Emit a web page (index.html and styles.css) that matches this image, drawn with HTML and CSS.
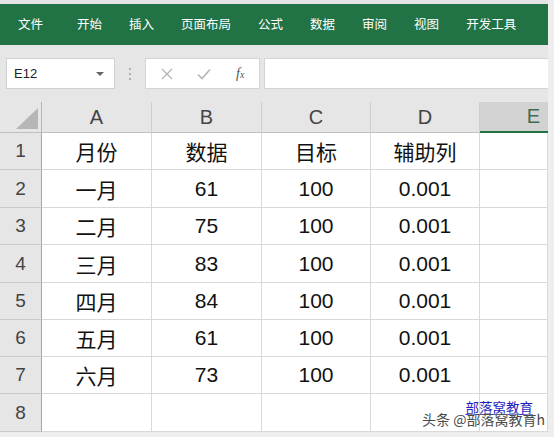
FILE: index.html
```html
<!DOCTYPE html>
<html lang="zh">
<head>
<meta charset="utf-8">
<link rel="stylesheet" href="styles.css">
</head>
<body>
<div class="app">
  <div class="ribbon">
    <span class="tab first">文件</span>
    <span class="tab">开始</span>
    <span class="tab">插入</span>
    <span class="tab">页面布局</span>
    <span class="tab">公式</span>
    <span class="tab">数据</span>
    <span class="tab">审阅</span>
    <span class="tab">视图</span>
    <span class="tab">开发工具</span>
  </div>
  <div class="fbar">
    <div class="namebox"><span class="ref">E12</span><span class="caret"></span></div>
    <div class="dots"><i></i><i></i><i></i></div>
    <div class="fbtns">
      <svg class="ico" width="12" height="12" viewBox="0 0 12 12"><path d="M1 1L11 11M11 1L1 11" stroke="#b4b4b4" stroke-width="1.3" fill="none"/></svg>
      <svg class="ico" width="14" height="12" viewBox="0 0 14 12"><path d="M1 6.5L5 10.5L13 1.5" stroke="#b4b4b4" stroke-width="1.6" fill="none"/></svg>
      <span class="fx">f<small>x</small></span>
    </div>
    <div class="finput"></div>
  </div>
  <div class="grid">
    <div class="corner"><svg width="22" height="21" viewBox="0 0 22 21"><path d="M22 0V21H0Z" fill="#b6b6b6"/></svg></div>
    <div class="ch">A</div><div class="ch">B</div><div class="ch">C</div><div class="ch">D</div><div class="ch sel">E</div>

    <div class="rh">1</div><div class="c">月份</div><div class="c">数据</div><div class="c">目标</div><div class="c">辅助列</div><div class="c"></div>
    <div class="rh">2</div><div class="c">一月</div><div class="c">61</div><div class="c">100</div><div class="c">0.001</div><div class="c"></div>
    <div class="rh">3</div><div class="c">二月</div><div class="c">75</div><div class="c">100</div><div class="c">0.001</div><div class="c"></div>
    <div class="rh">4</div><div class="c">三月</div><div class="c">83</div><div class="c">100</div><div class="c">0.001</div><div class="c"></div>
    <div class="rh">5</div><div class="c">四月</div><div class="c">84</div><div class="c">100</div><div class="c">0.001</div><div class="c"></div>
    <div class="rh">6</div><div class="c">五月</div><div class="c">61</div><div class="c">100</div><div class="c">0.001</div><div class="c"></div>
    <div class="rh">7</div><div class="c">六月</div><div class="c">73</div><div class="c">100</div><div class="c">0.001</div><div class="c"></div>
    <div class="rh">8</div><div class="c"></div><div class="c"></div><div class="c"></div><div class="c"></div><div class="c"></div>
  </div>
  <div class="wm">
    <span class="wm1">部落窝教育</span>
    <span class="wm2">头条 @部落窝教育h</span>
  </div>
</div>
</body>
</html>
```

FILE: styles.css
```css
html, body {
  margin: 0;
  padding: 0;
  background: #eeeeee;
}
body {
  width: 554px;
  height: 437px;
  overflow: hidden;
}
.app {
  position: relative;
  width: 548px;
  padding-top: 4px;
  background: #e4e4e4;
  font-family: "Liberation Sans", "Noto Sans CJK SC", sans-serif;
}
.ribbon {
  height: 41px;
  background: #217346;
  display: flex;
  align-items: center;
  padding-left: 18px;
  gap: 27px;
}
.tab {
  color: #ffffff;
  font-family: "Noto Sans CJK SC", sans-serif;
  font-size: 12.5px;
  line-height: 1;
}
.tab.first {
  margin-right: 7px;
}
.fbar {
  height: 57px;
  box-sizing: border-box;
  padding-top: 13px;
  display: flex;
  align-items: flex-start;
  background: #e6e6e6;
}
.namebox {
  margin-left: 6px;
  width: 109px;
  height: 31px;
  box-sizing: border-box;
  background: #fff;
  border: 1px solid #d0d0d0;
  display: flex;
  align-items: center;
  justify-content: space-between;
  padding: 0 10px 0 7px;
}
.ref {
  font-size: 13px;
  color: #222;
}
.caret {
  width: 0;
  height: 0;
  border-left: 4px solid transparent;
  border-right: 4px solid transparent;
  border-top: 4px solid #666;
}
.dots {
  width: 30px;
  height: 31px;
  display: flex;
  flex-direction: column;
  align-items: center;
  justify-content: center;
  gap: 3px;
}
.dots i {
  width: 2px;
  height: 2px;
  background: #b0b0b0;
}
.fbtns {
  width: 115px;
  height: 31px;
  box-sizing: border-box;
  background: #fff;
  border: 1px solid #d4d4d4;
  display: flex;
  align-items: center;
  padding-left: 15px;
  gap: 24px;
}
.fx {
  font-family: "Liberation Serif", serif;
  font-style: italic;
  font-size: 14px;
  color: #555;
  margin-left: 1px;
}
.fx small {
  font-size: 10px;
}
.finput {
  margin-left: 4px;
  flex: 1;
  height: 31px;
  box-sizing: border-box;
  background: #fff;
  border: 1px solid #d4d4d4;
  border-right: none;
}
.grid {
  display: grid;
  grid-template-columns: 42px 110px 110px 109px 109px 68px;
  grid-template-rows: 31px 37px 38px 37px 38px 37px 37px 37px 38px;
  background: #fff;
}
.corner {
  background: #e6e6e6;
  border-right: 1px solid #b5b5b5;
  border-bottom: 1px solid #c0c0c0;
  box-sizing: border-box;
  display: flex;
  align-items: flex-end;
  justify-content: flex-end;
  padding: 0 3px 3px 0;
}
.ch {
  background: #e6e6e6;
  border-right: 1px solid #cfcfcf;
  border-bottom: 1px solid #c0c0c0;
  box-sizing: border-box;
  display: flex;
  align-items: center;
  justify-content: center;
  font-size: 20px;
  color: #444;
}
.ch.sel {
  background: #d2d2d2;
  border-right: none;
  border-bottom: 2px solid #217346;
  color: #3d6d50;
  justify-content: flex-end;
  padding-right: 8px;
}
.rh {
  background: #e6e6e6;
  border-right: 1px solid #a8a8a8;
  border-bottom: 1px solid #cacaca;
  box-sizing: border-box;
  display: flex;
  align-items: center;
  justify-content: center;
  font-size: 19px;
  color: #444;
}
.c {
  border-right: 1px solid #d9d9d9;
  border-bottom: 1px solid #d9d9d9;
  box-sizing: border-box;
  display: flex;
  align-items: center;
  justify-content: center;
  font-size: 21px;
  color: #111;
}
.wm {
  position: absolute;
  right: 3px;
  bottom: -2px;
  width: 130px;
  height: 28px;
}
.wm1 {
  position: absolute;
  right: 12px;
  top: -5px;
  font-family: "Noto Sans CJK SC", sans-serif;
  font-size: 13.5px;
  line-height: 1;
  color: #1f1fc0;
  text-decoration: underline;
}
.wm2 {
  position: absolute;
  right: 0;
  top: 6px;
  font-family: "Noto Sans CJK SC", sans-serif;
  font-size: 14px;
  line-height: 1;
  white-space: nowrap;
  color: #4a4a4a;
  text-shadow: 0 0 2px #fff, 0 0 2px #fff;
}
```
